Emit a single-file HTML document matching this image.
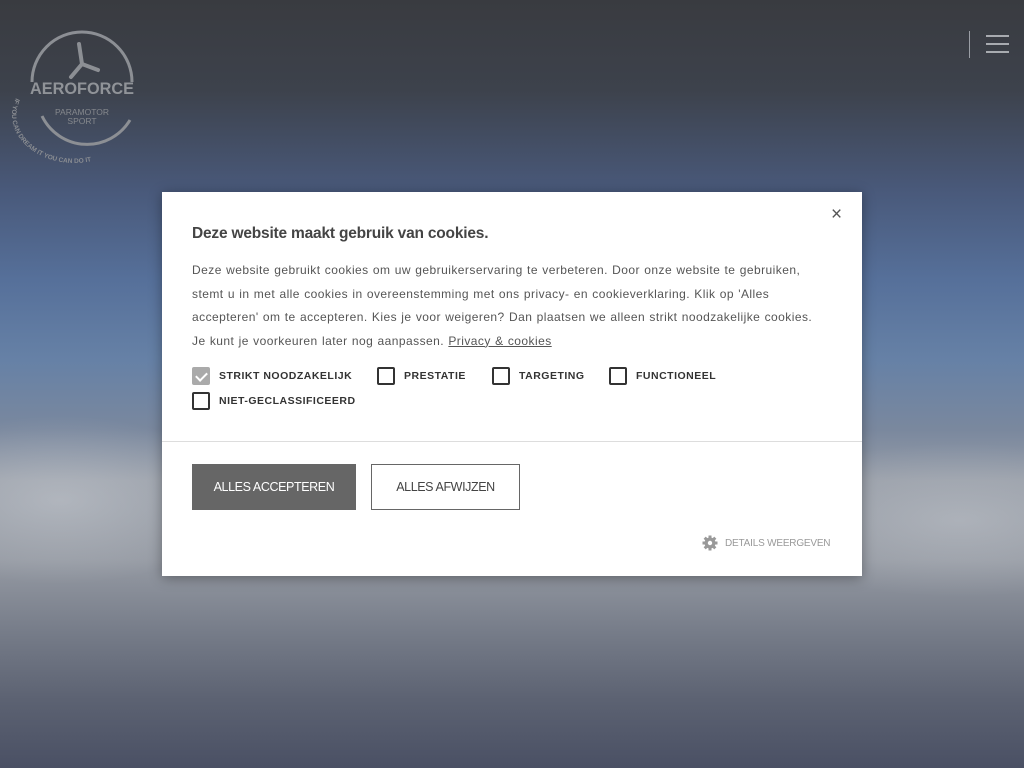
<!DOCTYPE html>
<html><head><meta charset="utf-8">
<style>
*{margin:0;padding:0;box-sizing:border-box}
html,body{width:1024px;height:768px;overflow:hidden}
body{font-family:"Liberation Sans",sans-serif;position:relative;
background:
radial-gradient(ellipse 260px 120px at 60px 500px,rgba(225,228,232,.35),transparent 70%),
radial-gradient(ellipse 300px 110px at 960px 520px,rgba(225,228,232,.3),transparent 70%),
linear-gradient(180deg,#393b40 0px,#3d424c 90px,#49597a 190px,#56709a 280px,#6681a6 360px,#7a889e 430px,#979da7 480px,#959aa3 560px,#737986 640px,#5c6272 700px,#4a5064 768px);}
.logo{position:absolute;left:12px;top:28px}
.burger{position:absolute;left:969px;top:31px;width:1px;height:27px;background:#9a9ea5}
.bl{position:absolute;left:986px;width:23px;height:2px;background:#a8abb0}
.dlg{position:absolute;left:162px;top:192px;width:700px;height:384px;background:#fff;box-shadow:0 2px 12px rgba(0,0,0,.35)}
.close{position:absolute;left:669px;top:12px;font-size:19px;color:#555}
h1{position:absolute;left:30px;top:33px;font-size:15.5px;font-weight:bold;color:#444;letter-spacing:-.2px}
.txt{position:absolute;left:30px;top:67px;width:660px;font-size:12px;line-height:23.5px;color:#555;letter-spacing:.45px;word-spacing:.5px;white-space:nowrap}
.txt a{color:#555;text-decoration:underline}
.cb{position:absolute;font-size:10.5px;font-weight:bold;letter-spacing:.5px;color:#333;display:flex;align-items:center}
.cb i{display:inline-block;width:18px;height:18px;border:2px solid #333;border-radius:2px;margin-right:9px}
.cb i.on{background:#aaa;border-color:#aaa;position:relative}
.cb i.on:after{content:"";position:absolute;left:4px;top:1px;width:5px;height:9px;border:solid #fff;border-width:0 2px 2px 0;transform:rotate(45deg)}
.hr{position:absolute;left:0;top:249px;width:700px;height:1px;background:#ddd}
.b1{position:absolute;left:30px;top:272px;width:164px;height:46px;background:#666;color:#fff;font-size:12.5px;letter-spacing:-.4px;display:flex;align-items:center;justify-content:center}
.b2{position:absolute;left:209px;top:272px;width:149px;height:46px;border:1px solid #666;color:#444;font-size:12.5px;letter-spacing:-.4px;display:flex;align-items:center;justify-content:center}
.det{position:absolute;left:540px;top:343px;font-size:10px;letter-spacing:-.2px;color:#999;display:flex;align-items:center}
</style></head><body>
<svg class="logo" width="130" height="135" viewBox="0 0 130 135">
<g transform="translate(0,6)">
<g fill="none" stroke="#8c8f94" stroke-width="3">
<path d="M20 48 A50 50 0 0 1 120 48"/>
<path d="M30 82 A50 50 0 0 0 118 86"/>
</g>
<g stroke="#8c8f94" stroke-width="4" stroke-linecap="round">
<line x1="70" y1="30" x2="67" y2="10"/><line x1="70" y1="30" x2="86" y2="36"/><line x1="70" y1="30" x2="59" y2="43"/>
</g>
<text x="18" y="60" textLength="104" lengthAdjust="spacingAndGlyphs" font-family="Liberation Sans" font-weight="bold" font-size="17" fill="#909398">AEROFORCE</text>
<text x="70" y="81" text-anchor="middle" font-family="Liberation Sans" font-size="8.5" fill="#85888d">PARAMOTOR</text>
<text x="70" y="90" text-anchor="middle" font-family="Liberation Sans" font-size="8.5" fill="#85888d">SPORT</text>
<path id="arc" d="M4 64 A62 48 0 0 0 120 98" fill="none"/>
<text font-family="Liberation Sans" font-weight="bold" font-size="6.5" fill="#8a8d92"><textPath href="#arc">IF YOU CAN DREAM IT YOU CAN DO IT</textPath></text>
</g>
</svg>
<div class="burger"></div>
<div class="bl" style="top:35px"></div><div class="bl" style="top:43px"></div><div class="bl" style="top:51px"></div>
<div class="dlg">
<div class="close">×</div>
<h1>Deze website maakt gebruik van cookies.</h1>
<div class="txt">Deze website gebruikt cookies om uw gebruikerservaring te verbeteren. Door onze website te gebruiken,<br>stemt u in met alle cookies in overeenstemming met ons privacy- en cookieverklaring. Klik op 'Alles<br>accepteren' om te accepteren. Kies je voor weigeren? Dan plaatsen we alleen strikt noodzakelijke cookies.<br>Je kunt je voorkeuren later nog aanpassen. <a>Privacy &amp; cookies</a></div>
<div class="cb" style="left:30px;top:175px"><i class="on"></i>STRIKT NOODZAKELIJK</div>
<div class="cb" style="left:215px;top:175px"><i></i>PRESTATIE</div>
<div class="cb" style="left:330px;top:175px"><i></i>TARGETING</div>
<div class="cb" style="left:447px;top:175px"><i></i>FUNCTIONEEL</div>
<div class="cb" style="left:30px;top:200px"><i></i>NIET-GECLASSIFICEERD</div>
<div class="hr"></div>
<div class="b1">ALLES ACCEPTEREN</div>
<div class="b2">ALLES AFWIJZEN</div>
<div class="det"><svg width="16" height="16" viewBox="0 0 16 16" style="margin-right:7px"><g fill="#999"><circle cx="8" cy="8" r="5.5"/><rect x="6.5" y="0.5" width="3" height="15"/><rect x="0.5" y="6.5" width="15" height="3"/><rect x="6.5" y="0.5" width="3" height="15" transform="rotate(45 8 8)"/><rect x="6.5" y="0.5" width="3" height="15" transform="rotate(-45 8 8)"/></g><circle cx="8" cy="8" r="2.2" fill="#fff"/></svg>DETAILS WEERGEVEN</div>
</div>
</body></html>
